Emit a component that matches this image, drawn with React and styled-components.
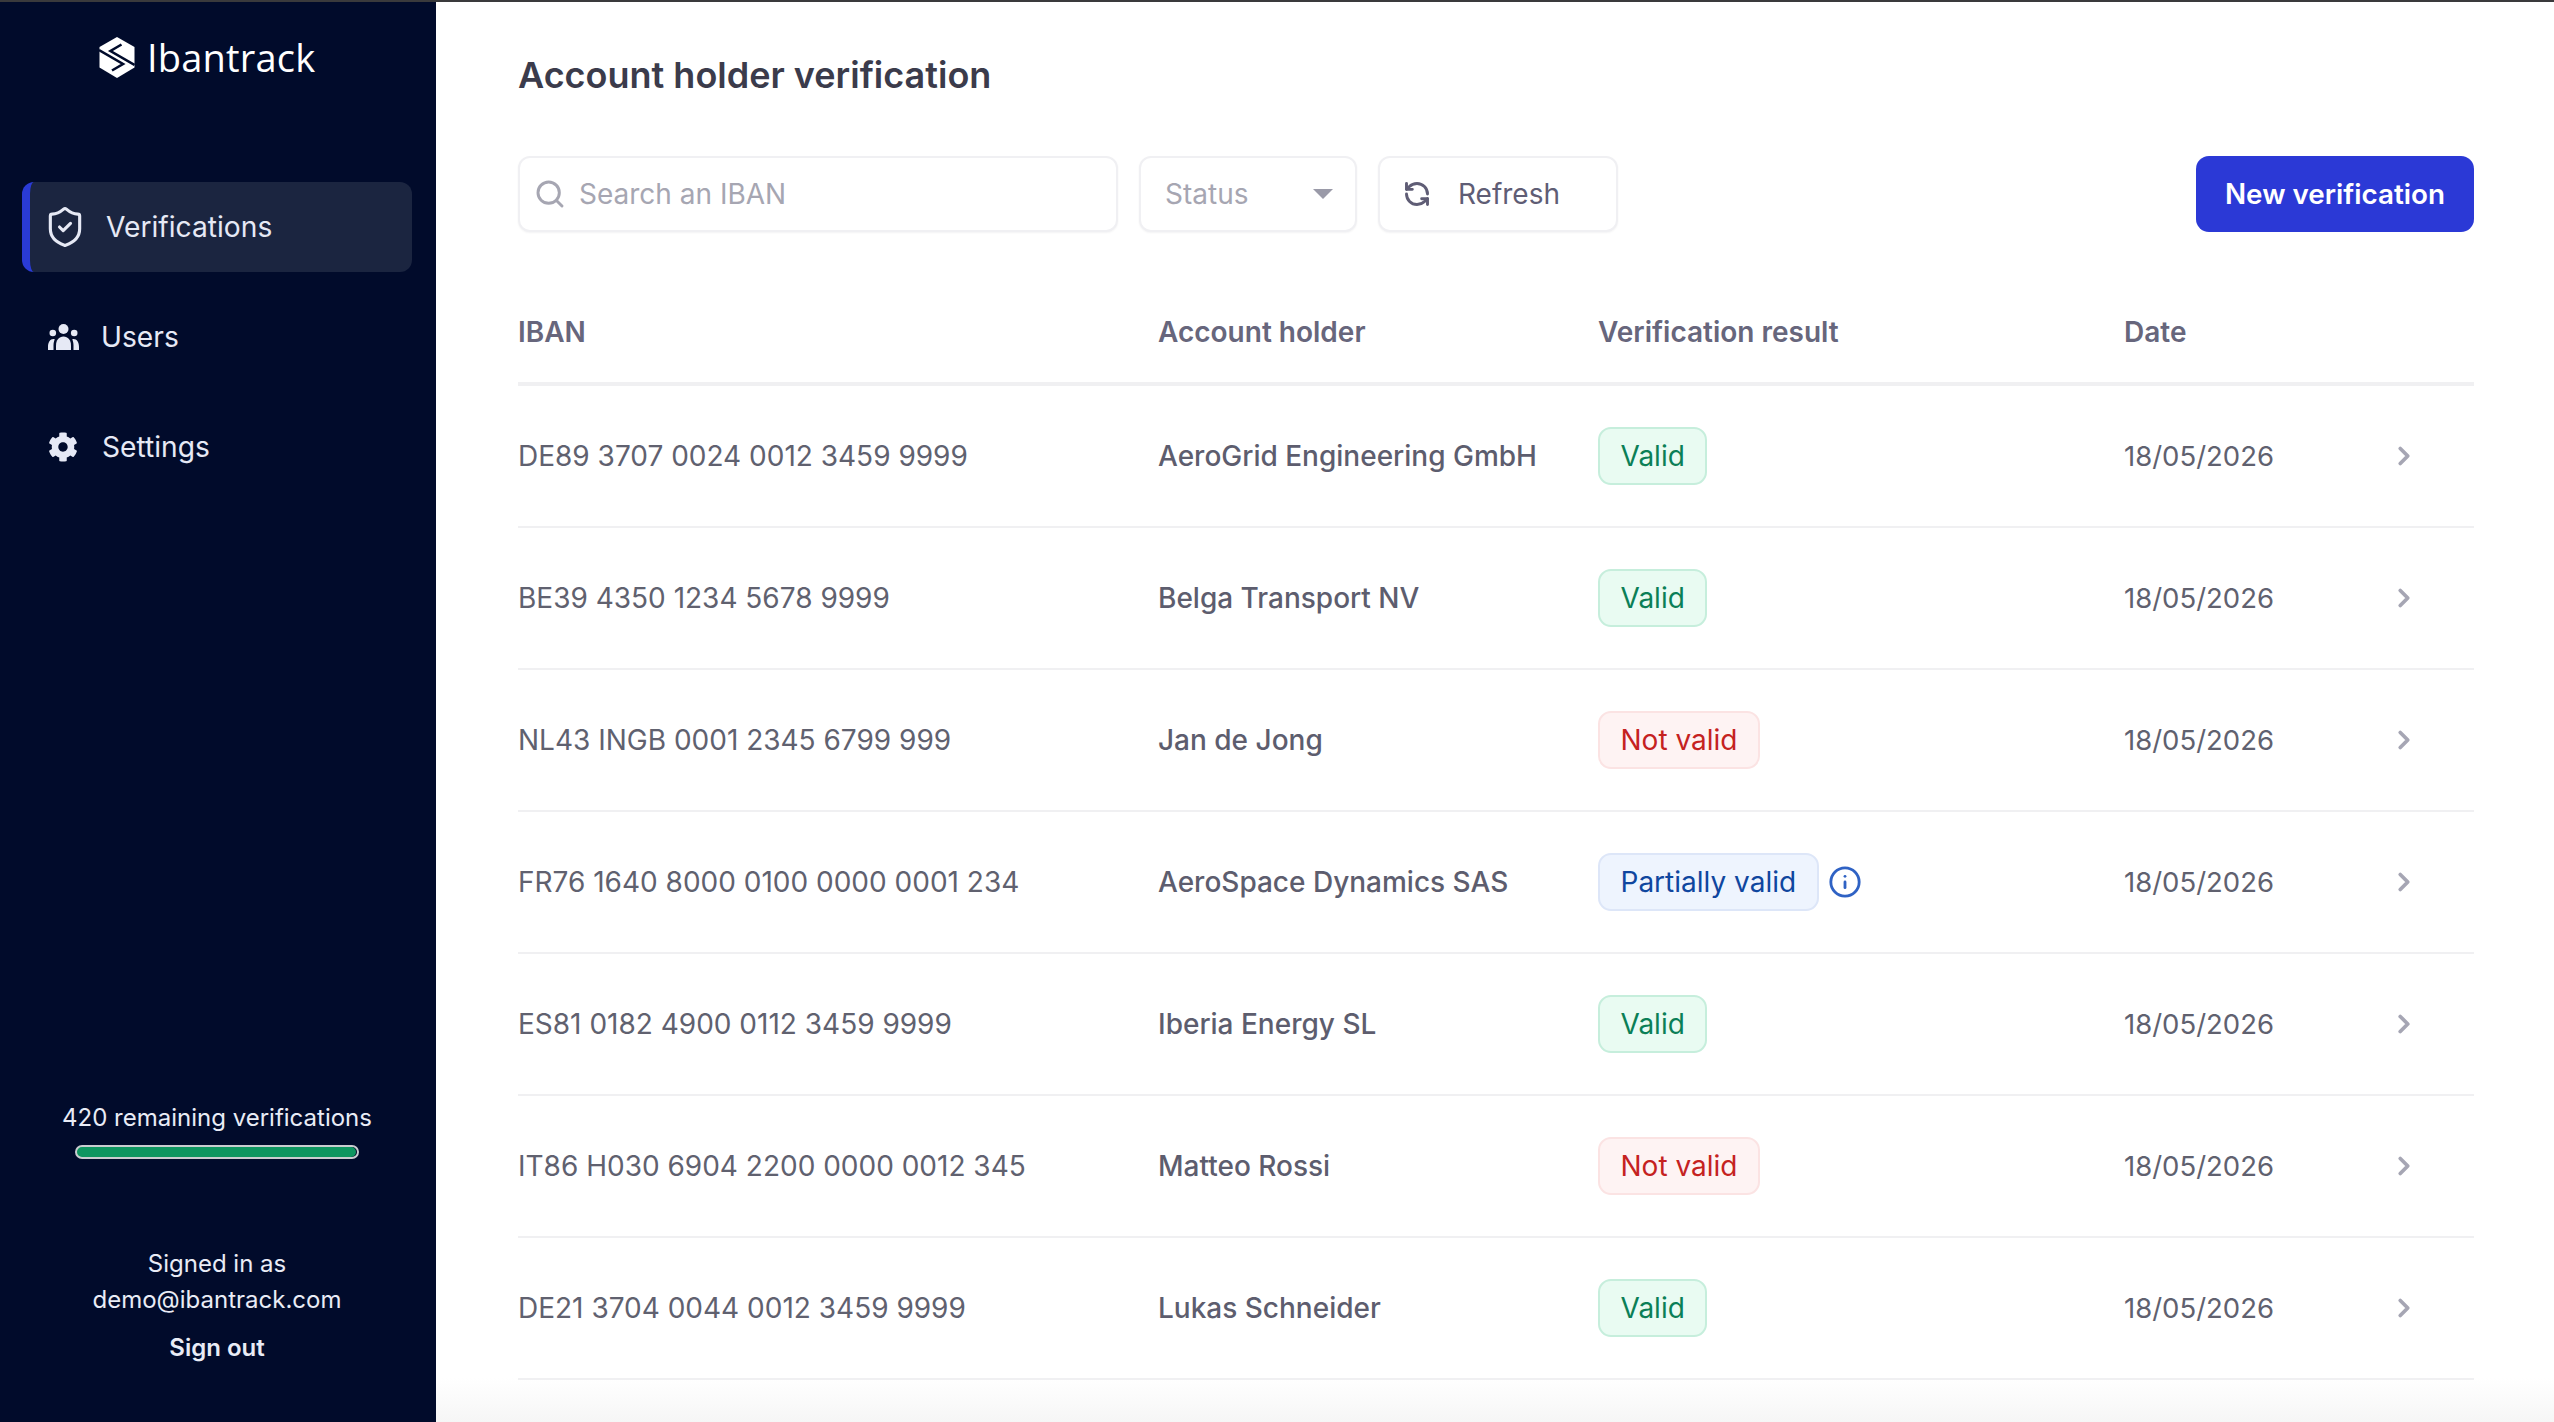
import React from 'react';
import styled, { createGlobalStyle } from 'styled-components';
import { ShieldCheck, RefreshCcw, ChevronRight, Search, Info } from 'lucide-react';
import { FaCog } from 'react-icons/fa';

const GlobalStyle = createGlobalStyle`
  html, body {
    margin: 0;
    height: 100%;
    background: #fff;
  }
  body {
    font-family: 'Inter', 'Liberation Sans', sans-serif;
  }
  * {
    box-sizing: border-box;
  }
`;

const Page = styled.div`
  display: flex;
  height: 100vh;
  overflow: hidden;
  border-top: 2px solid #3a3a3c;
`;

const Sidebar = styled.aside`
  width: 436px;
  flex-shrink: 0;
  display: flex;
  flex-direction: column;
  background: #010b2b;
  color: #e6e9f5;
  padding: 0 24px 56px 22px;
`;

const Brand = styled.div`
  height: 180px;
  padding: 35px 0 0 77px;
  display: flex;
  align-items: flex-start;
  gap: 12px;
  color: #fff;
`;

const BrandName = styled.span`
  font-family: 'Open Sans', sans-serif;
  font-size: 38px;
  line-height: 41px;
  letter-spacing: 0.2px;
`;

const Nav = styled.nav`
  display: flex;
  flex-direction: column;
  gap: 20px;
`;

const NavItem = styled.a`
  height: 90px;
  display: flex;
  align-items: center;
  gap: ${p => p.$gap}px;
  padding-left: ${p => (p.$active ? 13 : 26)}px;
  padding-bottom: 1px;
  border-radius: 12px;
  font-size: 28.200px;
  color: #e6e9f5;
  background: ${p => (p.$active ? '#1b2540' : 'transparent')};
  border-left: ${p => (p.$active ? '8px solid #2a3bd6' : 'none')};
`;

const SidebarFoot = styled.div`
  margin-top: auto;
  display: flex;
  flex-direction: column;
  align-items: center;
  font-size: 24px;
  color: #e9ecf6;
`;

const Remaining = styled.div`
  line-height: 32px;
`;

const Meter = styled.div`
  width: 284px;
  height: 14px;
  margin-top: 11px;
  padding: 2px 0 2px 2px;
  outline: 2px solid #c9cdd0;
  outline-offset: -2px;
  border-radius: 7px;
  overflow: hidden;
`;

const MeterFill = styled.div`
  height: 100%;
  background: #0e9660;
  border-radius: 0 6px 6px 0;
`;

const Account = styled.div`
  margin-top: 87px;
  text-align: center;
  line-height: 36px;
`;

const SignOut = styled.a`
  margin-top: 11px;
  font-weight: 600;
  line-height: 37px;
`;

const Main = styled.main`
  flex: 1;
  min-width: 0;
  padding: 48px 80px 0 82px;
  background: linear-gradient(to bottom, #fff calc(100% - 44px), #f6f6f6 100%);
`;

const Title = styled.h1`
  margin: 0;
  font-size: 36px;
  line-height: 50px;
  font-weight: 600;
  color: #3b3b4b;
`;

const Toolbar = styled.div`
  margin-top: 56px;
  height: 76px;
  display: flex;
  align-items: stretch;
  gap: 21px;
`;

const Field = styled.div`
  width: ${p => p.$width}px;
  display: flex;
  align-items: center;
  padding: 0 ${p => p.$padRight}px 0 ${p => p.$padLeft}px;
  gap: ${p => p.$gap}px;
  border: 2px solid #f0f0f3;
  border-radius: 12px;
  background: #fff;
  box-shadow: 0 1px 2px rgba(20, 20, 40, 0.05);
  font-size: 28px;
  color: ${p => p.$color};
`;

const Caret = styled.span`
  margin-left: auto;
  width: 0;
  height: 0;
  border-left: 10px solid transparent;
  border-right: 10px solid transparent;
  border-top: 10px solid #9a9aa8;
`;

const PrimaryButton = styled.button`
  margin-left: auto;
  width: 278px;
  padding: 0;
  border: 0;
  border-radius: 13px;
  background: #2b39d6;
  color: #fff;
  font-family: inherit;
  font-size: 27.800px;
  font-weight: 600;
`;

const columns = '640px 440px 526px 1fr 140px';

const TableHead = styled.div`
  margin-top: 52px;
  height: 102px;
  padding-bottom: 2px;
  display: grid;
  grid-template-columns: ${columns};
  align-items: center;
  border-bottom: 4px solid #f0f0f2;
  font-size: 28px;
  font-weight: 600;
  color: #67667c;
`;

const Row = styled.div`
  height: 142px;
  padding-bottom: 1px;
  display: grid;
  grid-template-columns: ${columns};
  align-items: center;
  border-bottom: 2px solid #f0f0f2;
  font-size: 28px;
  color: #60616f;
`;

const Holder = styled.div`
  font-weight: 500;
  color: #5d5d6e;
`;

const DateCell = styled.div`
  font-size: 27.500px;
`;

const ResultCell = styled.div`
  display: flex;
  align-items: center;
  gap: 9px;
  color: #2f62c4;
`;

const palette = {
  valid: { bg: '#e9fbf2', border: '#c6eedc', color: '#0b7f57' },
  invalid: { bg: '#fef3f3', border: '#fbe3e3', color: '#c5221f' },
  partial: { bg: '#eef4fe', border: '#dde6f8', color: '#0f469f' },
};

const Badge = styled.span`
  height: 58px;
  display: inline-flex;
  align-items: center;
  padding: 0 20.500px;
  border: 2px solid ${p => palette[p.$kind].border};
  border-radius: 13px;
  background: ${p => palette[p.$kind].bg};
  color: ${p => palette[p.$kind].color};
`;

const ChevronCell = styled.div`
  display: flex;
  justify-content: center;
  color: #a6a6b4;
`;

const LogoMark = () => (
  <svg width="36" height="41" viewBox="0 0 36 41">
    <path d="M18 0 35.500 10V30.500L18 41 .5 30.500V10Z" fill="#fff" />
    <path
      d="M0 13 24 27 13 33.500M35.500 28 11.500 14 22.500 7.500"
      fill="none"
      stroke="#010b2b"
      strokeWidth="2.600"
    />
  </svg>
);

const UsersIcon = () => (
  <svg width="31" height="26" viewBox="0 0 31 26" fill="#e6e9f5">
    <circle cx="15.500" cy="5" r="5" />
    <circle cx="4.800" cy="9" r="3.300" />
    <circle cx="26.200" cy="9" r="3.300" />
    <path d="M8 26v-4.500C8 16 11 12.500 15.500 12.500S23 16 23 21.500V26Z" />
    <path d="M0 26v-3C0 18.500 2 15 5.500 15c.5 0 .8.100 1.200.2C6 17 5.500 19 5.500 21.500V26Z" />
    <path d="M31 26v-3c0-4.500-2-8-5.500-8-.5 0-.8.100-1.200.2.700 1.800 1.200 3.800 1.200 6.300V26Z" />
  </svg>
);

const rows = [
  { iban: 'DE89 3707 0024 0012 3459 9999', holder: 'AeroGrid Engineering GmbH', kind: 'valid' },
  { iban: 'BE39 4350 1234 5678 9999', holder: 'Belga Transport NV', kind: 'valid' },
  { iban: 'NL43 INGB 0001 2345 6799 999', holder: 'Jan de Jong', kind: 'invalid' },
  { iban: 'FR76 1640 8000 0100 0000 0001 234', holder: 'AeroSpace Dynamics SAS', kind: 'partial' },
  { iban: 'ES81 0182 4900 0112 3459 9999', holder: 'Iberia Energy SL', kind: 'valid' },
  { iban: 'IT86 H030 6904 2200 0000 0012 345', holder: 'Matteo Rossi', kind: 'invalid' },
  { iban: 'DE21 3704 0044 0012 3459 9999', holder: 'Lukas Schneider', kind: 'valid' },
];

const labels = { valid: 'Valid', invalid: 'Not valid', partial: 'Partially valid' };

const App = () => (
  <Page>
    <GlobalStyle />
    <Sidebar>
      <Brand>
        <LogoMark />
        <BrandName>Ibantrack</BrandName>
      </Brand>
      <Nav>
        <NavItem $active $gap={19}>
          <ShieldCheck size={44} strokeWidth={1.700} />
          Verifications
        </NavItem>
        <NavItem $gap={22}>
          <UsersIcon />
          Users
        </NavItem>
        <NavItem $gap={24}>
          <FaCog size={30} />
          Settings
        </NavItem>
      </Nav>
      <SidebarFoot>
        <Remaining>420 remaining verifications</Remaining>
        <Meter>
          <MeterFill style={{ width: `${(420 / 425) * 100}%` }} />
        </Meter>
        <Account>
          Signed in as
          <br />
          demo@ibantrack.com
        </Account>
        <SignOut>Sign out</SignOut>
      </SidebarFoot>
    </Sidebar>
    <Main>
      <Title>Account holder verification</Title>
      <Toolbar>
        <Field $width={600} $padLeft={14} $padRight={15} $gap={13} $color="#a6a6b2">
          <Search size={32} color="#a6a6b2" strokeWidth={2.200} />
          Search an IBAN
        </Field>
        <Field $width={218} $padLeft={24} $padRight={22} $color="#a6a6b2">
          Status
          <Caret />
        </Field>
        <Field $width={240} $padLeft={23} $padRight={20} $gap={27} $color="#5f5d75">
          <RefreshCcw size={28} color="#5f5d75" strokeWidth={2.500} />
          Refresh
        </Field>
        <PrimaryButton>New verification</PrimaryButton>
      </Toolbar>
      <TableHead>
        <div>IBAN</div>
        <div>Account holder</div>
        <div>Verification result</div>
        <div>Date</div>
      </TableHead>
      {rows.map(row => (
        <Row key={row.iban}>
          <div>{row.iban}</div>
          <Holder>{row.holder}</Holder>
          <ResultCell>
            <Badge $kind={row.kind}>{labels[row.kind]}</Badge>
            {row.kind === 'partial' && <Info size={34} strokeWidth={2} />}
          </ResultCell>
          <DateCell>18/05/2026</DateCell>
          <ChevronCell>
            <ChevronRight size={30} strokeWidth={3} />
          </ChevronCell>
        </Row>
      ))}
    </Main>
  </Page>
);

export default App;
